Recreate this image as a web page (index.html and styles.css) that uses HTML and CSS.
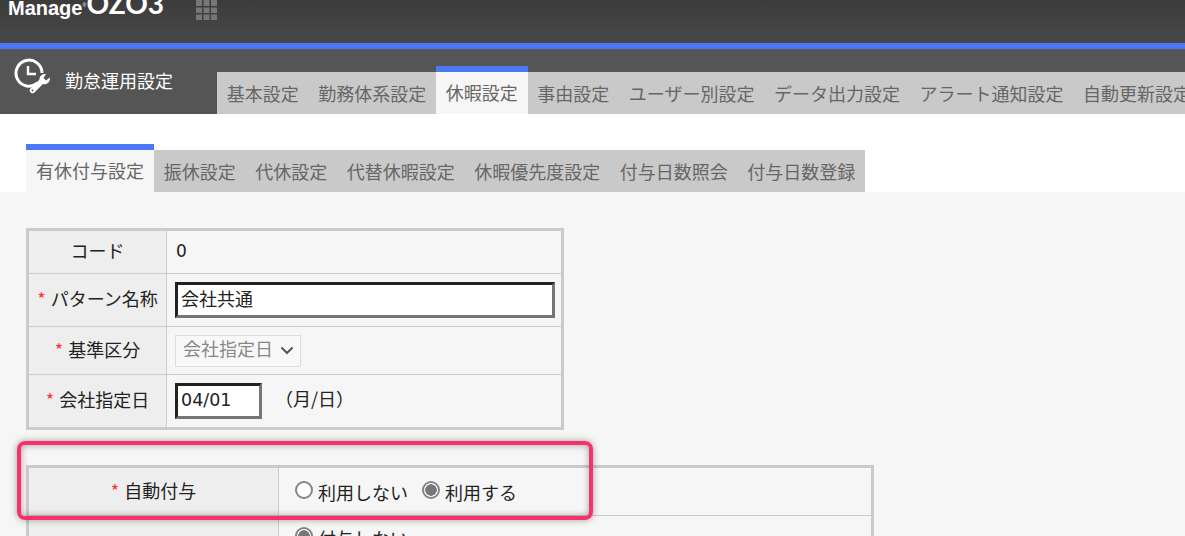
FILE: index.html
```html
<!DOCTYPE html>
<html lang="ja">
<head>
<meta charset="utf-8">
<title>勤怠運用設定</title>
<link rel="stylesheet" href="styles.css">
</head>
<body>
<header class="topbar">
  <div class="logo"><span class="logo-manage">Manage</span><sup class="logo-r">®</sup><span class="logo-ozo">OZO3</span></div>
  <svg class="apps" width="21" height="20" viewBox="0 0 21 20" fill="#777">
    <rect x="0" y="0" width="6" height="6"/><rect x="7.5" y="0" width="6" height="6"/><rect x="15" y="0" width="6" height="6"/>
    <rect x="0" y="7.5" width="6" height="5.5"/><rect x="7.5" y="7.5" width="6" height="5.5"/><rect x="15" y="7.5" width="6" height="5.5"/>
    <rect x="0" y="14.5" width="6" height="5.5"/><rect x="7.5" y="14.5" width="6" height="5.5"/><rect x="15" y="14.5" width="6" height="5.5"/>
  </svg>
</header>
<nav class="mainbar">
  <div class="apptitle">
    <svg class="appicon" width="38" height="36" viewBox="0 0 38 36" fill="none" stroke="#fff">
      <path d="M24.5 25 A13 13 0 1 1 29 15" stroke-width="3"/>
      <path d="M15 8 V16 H23" stroke-width="2.4"/>
      <path d="M19.5 32.5 L29 23" stroke-width="5.4" stroke-linecap="round"/>
      <path d="M26.5 22 A5.5 5.5 0 0 1 33 16 L30.5 20 L33 22.5 L36.8 19.5 A5.5 5.5 0 0 1 30 26 Z" fill="#fff" stroke="none"/>
      <circle cx="19.5" cy="32.5" r="1" fill="#555" stroke="none"/>
    </svg>
    <span class="apptitle-text">勤怠運用設定</span>
  </div>
  <ul class="tabs tabs-main">
    <li class="tab">基本設定</li>
    <li class="tab">勤務体系設定</li>
    <li class="tab tab-active">休暇設定</li>
    <li class="tab">事由設定</li>
    <li class="tab">ユーザー別設定</li>
    <li class="tab">データ出力設定</li>
    <li class="tab">アラート通知設定</li>
    <li class="tab">自動更新設定</li>
  </ul>
</nav>
<div class="subbar">
  <ul class="tabs tabs-sub">
    <li class="tab tab-active">有休付与設定</li>
    <li class="tab">振休設定</li>
    <li class="tab">代休設定</li>
    <li class="tab">代替休暇設定</li>
    <li class="tab">休暇優先度設定</li>
    <li class="tab">付与日数照会</li>
    <li class="tab">付与日数登録</li>
  </ul>
</div>
<main class="content">
  <table class="form form-a">
    <tr class="row-code"><th>コード</th><td class="num">0</td></tr>
    <tr class="row-name"><th><span class="req">*</span>パターン名称</th><td><input class="field field-wide" type="text" value="会社共通"></td></tr>
    <tr class="row-kind"><th><span class="req">*</span>基準区分</th><td><span class="select">会社指定日<svg class="chev" width="14" height="9" viewBox="0 0 14 9" fill="none" stroke="#555" stroke-width="2"><path d="M1.5 1.5 L7 7 L12.5 1.5"/></svg></span></td></tr>
    <tr class="row-date"><th><span class="req">*</span>会社指定日</th><td><input class="field field-date" type="text" value="04/01"><span class="hint">（月/日）</span></td></tr>
  </table>
  <table class="form form-b">
    <tr class="row-auto"><th><span class="req">*</span>自動付与</th><td>
      <label class="radio"><input type="radio" name="auto"><span>利用しない</span></label>
      <label class="radio"><input type="radio" name="auto" checked><span>利用する</span></label>
    </td></tr>
    <tr class="row-next"><th></th><td>
      <label class="radio"><input type="radio" name="give" checked><span>付与しない</span></label>
    </td></tr>
  </table>
  <div class="highlight"></div>
</main>
</body>
</html>
```
FILE: styles.css
```css
* { box-sizing: border-box; }
html, body { margin: 0; height: 536px; overflow: hidden; }
body {
  width: 1185px;
  background: #f6f6f6;
  color: #222;
  font-family: "Noto Sans CJK JP", "Noto Sans", sans-serif;
  font-size: 18px;
}
.topbar {
  height: 49px;
  background: linear-gradient(#3c3c3c, #484848);
  border-bottom: 6px solid #4d78f5;
  display: flex;
  align-items: flex-start;
  overflow: hidden;
}
.logo {
  display: flex;
  align-items: flex-start;
  margin: -12px 0 0 8px;
  width: 188px;
  color: #fff;
  white-space: nowrap;
  line-height: 40px;
}
.logo-manage { font: bold 20px/40px "Liberation Sans", sans-serif; }
.logo-r { font: 5px/1 "Liberation Sans", sans-serif; margin-top: 15px; width: 4px; }
.logo-ozo { font: bold 28px/40px "Lato", sans-serif; margin-top: -5px; }
.apps { display: block; }
.mainbar {
  height: 65px;
  background: #555;
  display: flex;
  overflow: hidden;
}
.apptitle {
  width: 217px;
  flex: none;
  display: flex;
  color: #fff;
}
.appicon { margin: 9px 0 0 13px; flex: none; }
.apptitle-text { margin: 16px 0 0 14px; line-height: 30px; }
.tabs {
  list-style: none;
  margin: 0;
  padding: 0;
  display: flex;
  align-items: flex-end;
  white-space: nowrap;
}
.tab {
  height: 42px;
  line-height: 42px;
  padding: 0 9.75px;
  background: #c9c9c9;
  color: #666;
}
.tab-active {
  height: 48px;
  line-height: 40px;
  background: #f6f6f6;
  border-top: 6px solid #4d78f5;
}
.subbar {
  height: 78px;
  background: #fff;
  padding: 30px 0 0 26px;
}
.tabs-main { height: 65px; }
.tabs-sub { height: 48px; }
.tabs-sub .tab-active { padding: 0 10px; }
.content {
  position: relative;
  padding: 36px 0 0 26px;
}
.form {
  border-collapse: collapse;
  border: 3px solid #cbcbcb;
  table-layout: fixed;
}
.form th, .form td {
  border: 1px solid #cbcbcb;
  padding: 0;
  font-weight: normal;
}
.form th { background: #eee; text-align: center; padding-bottom: 4px; }
.form td { padding-left: 8px; }
.form-a { width: 538px; }
.form-a th { width: 139px; }
.row-code { height: 44px; }
.form td.num { padding: 0 0 3px 9px; font-family: "DejaVu Sans", sans-serif; font-size: 17px; }
.row-name { height: 53px; }
.row-kind { height: 48px; }
.row-date { height: 54px; }
.req { color: #f33; margin-right: 5px; }
.field {
  display: block;
  height: 36px;
  padding: 0 3px 5px;
  border: 3px solid;
  border-color: #222 #767676 #767676 #222;
  background: #fff;
  color: #222;
  font: inherit;
  outline: none;
}
.field-wide { width: 380px; }
.field-date {
  width: 87px;
  display: inline-block;
  vertical-align: middle;
  font-family: "DejaVu Sans", sans-serif;
  font-size: 17.5px;
  padding-bottom: 3px;
}
.hint { margin-left: 13px; vertical-align: middle; position: relative; top: -3px; }
.select {
  display: inline-flex;
  align-items: center;
  height: 32px;
  width: 126px;
  padding: 0 0 5px 7px;
  border: 1px solid #ddd;
  background: #f8f8f8;
  color: #888;
  vertical-align: middle;
}
.chev { margin: 5px 0 0 7px; }
.form-b { margin-top: 35px; width: 848px; }
.form-b th { width: 251px; }
.form-b td { padding: 0 0 1px 16px; }
.row-auto { height: 49px; }
.row-next { height: 46px; }
.radio { display: inline-flex; align-items: flex-start; margin-right: 10px; }
.radio input {
  appearance: none;
  width: 18px;
  height: 18px;
  margin: 0 5px 0 0;
  border: 2px solid #858585;
  border-radius: 50%;
  background: #fff;
}
.radio input:checked {
  background: radial-gradient(circle, #777 0 5.5px, #fff 6px);
}
.radio span { line-height: 26px; margin-top: -2px; }
.highlight {
  position: absolute;
  left: 17px;
  top: 249px;
  width: 576px;
  height: 79px;
  border: 4px solid #f8316c;
  border-radius: 8px;
  box-shadow: 0 0 7px rgba(0,0,0,.35), inset 0 0 7px rgba(0,0,0,.35);
}
```
